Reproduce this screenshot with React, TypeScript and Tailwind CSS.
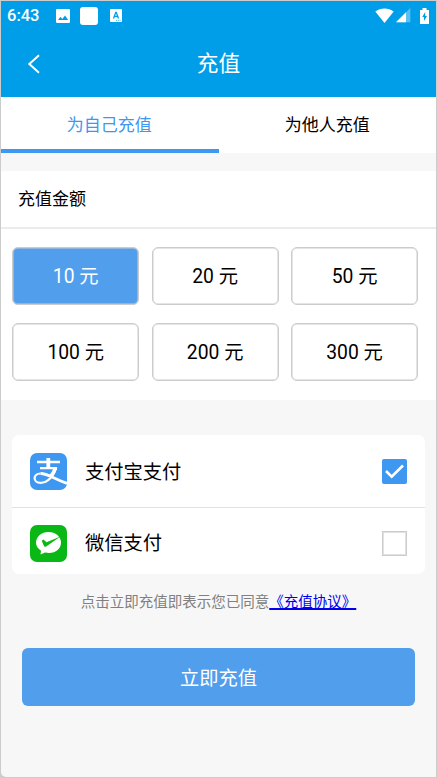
import clsx from 'clsx';

const amounts = [10, 20, 50, 100, 200, 300];

function StatusBar() {
  return (
    <div className="flex h-[29px] items-center pr-[7px] pl-[6px] text-white">
      <span className="w-[35px] pt-[2px] text-[16.5px] leading-none font-medium">6:43</span>
      <svg className="ml-[14px]" width="14" height="14" viewBox="0 0 14 14">
        <rect width="14" height="14" rx="1.3" fill="white" />
        <path d="M2 11 4.5 7.8 6.3 10 9 6.5 12.2 11Z" fill="#009ee8" />
      </svg>
      <div className="ml-[10px] h-[18px] w-[18px] rounded-[3px] bg-white" />
      <svg className="ml-[12px]" width="12" height="13" viewBox="0 0 12 13">
        <rect width="12" height="13" rx="1" fill="white" />
        <path d="M2.8 9.5 5.3 2.8H6.7L9.2 9.5H7.7L7.2 8H4.8L4.3 9.5ZM5.2 6.8H6.8L6 4.5Z" fill="#009ee8" fillRule="evenodd" />
        <path d="M6 11.3H11" stroke="#009ee8" strokeWidth="0.8" strokeDasharray="1 0.8" />
      </svg>
      <svg className="ml-auto" width="19" height="16" viewBox="0 0 19 16">
        <path d="M0.3 3.6C5.5-.6 13.5-.6 18.7 3.6L9.5 15Z" fill="white" />
      </svg>
      <svg className="ml-[2px]" width="15" height="15" viewBox="0 0 15 15">
        <path d="M14.3 0V14.3H0Z" fill="white" fillOpacity="0.35" />
        <path d="M10 4.3V14.3H0Z" fill="white" />
      </svg>
      <svg className="ml-[9px]" width="9" height="16" viewBox="0 0 9 16">
        <path d="M2.5 0h4v2H9v14H0V2h2.5Z" fill="white" />
        <path d="M5.2 4 2.2 9H4v4L7 8H5.2Z" fill="#009ee8" />
      </svg>
    </div>
  );
}

function AlipayIcon() {
  return (
    <svg width="37" height="37" viewBox="0 0 37 37">
      <rect width="37" height="37" rx="7" fill="#3e97f0" />
      <g fill="none" stroke="white">
        <path d="M7 9H30M10 15.2H27" strokeWidth="2.3" />
        <path d="M18.3 5V15.2" strokeWidth="3.8" />
        <path d="M26 15C24 22.5 18 29.8 10.5 29.8C2.8 29.8 2.5 20.5 10.5 20.5" strokeWidth="2.2" />
        <path d="M10.5 20.5C18 20.5 24 26 37 30.3" strokeWidth="2.8" />
        <path d="M25.5 15C24.3 18.5 22.8 21 20.5 23.8" strokeWidth="3.8" />
      </g>
    </svg>
  );
}

function WechatPayIcon() {
  return (
    <svg width="37" height="37" viewBox="0 0 37 37">
      <rect width="37" height="37" rx="7" fill="#09b814" />
      <path d="M18.5 7C11.5 7 6 11.7 6 17.5C6 21 8 23.8 11 25.7L10.5 29.5L15 27.5C24 29.6 31 24.5 31 17.5C31 11.7 25.5 7 18.5 7Z" fill="white" />
      <path d="M11.7 15.8 13.5 14.5 16.5 17.3 30.5 11.5 15.8 21.8 14.2 21.5Z" fill="#09b814" />
    </svg>
  );
}

function Checkbox({ checked }: { checked: boolean }) {
  if (!checked) return <span className="h-[25px] w-[25px] border border-[#ccc] bg-white shadow-[inset_0_0_0_1px_#e2e2e2]" />;
  return (
    <span className="h-[25px] w-[25px] rounded-[2px] bg-[#3e97f0]">
      <svg width="25" height="25" viewBox="0 0 25 25">
        <path d="M4 12 9.7 17.7 21 6.5" fill="none" stroke="white" strokeWidth="2.6" />
      </svg>
    </span>
  );
}

export default function App() {
  return (
    <div className="h-[778px] w-[437px] bg-[#ccc] p-px font-[Roboto,'Noto_Sans_CJK_SC',sans-serif] text-black">
      <div className="flex h-full flex-col overflow-hidden rounded-bl-[5px] bg-[#f7f7f7]">
        <header className="h-[96px] shrink-0 bg-[#009ee8] text-white">
          <StatusBar />
          <div className="grid h-[67px] grid-cols-[60px_1fr_60px] items-center">
            <svg className="ml-[26px]" width="14" height="20" viewBox="0 0 14 20">
              <path d="M12 1.3 2.3 10 12 18.7" fill="none" stroke="white" strokeWidth="2" />
            </svg>
            <h1 className="text-center text-[21.7px] leading-none">充值</h1>
          </div>
        </header>

        <nav className="grid h-[56px] shrink-0 grid-cols-2 bg-white text-[17px]">
          <button className="border-b-4 border-[#3e97f0] pt-[5px] pr-px text-[#3e97f0]">为自己充值</button>
          <button className="border-b-4 border-white pt-[5px]">为他人充值</button>
        </nav>

        <section className="mt-[18px] h-[229px] shrink-0 bg-white">
          <h2 className="flex h-[58px] items-center border-b-2 border-[#ebebeb] pt-[2px] pl-[17px] text-[17px]">充值金额</h2>
          <div className="grid grid-cols-3 gap-x-[12.5px] gap-y-[18px] pt-[18px] pr-[18px] pl-[11.3px]">
            {amounts.map((amount) => (
              <button
                key={amount}
                className={clsx(
                  'h-[58px] rounded-[6px] border border-[#ccc] pt-[2px] text-[19.3px] shadow-[inset_0_0_0_0.5px_#ccc]',
                  amount === 10 && 'bg-[#509eec] text-white',
                )}
              >
                {amount} 元
              </button>
            ))}
          </div>
        </section>

        <section className="mt-[35px] mr-[11px] ml-[11px] h-[139px] shrink-0 rounded-[7px] bg-white text-[19.3px]">
          <div className="flex h-[73px] items-center border-b border-[#e2e2e2] pr-[18px] pl-[18px]">
            <AlipayIcon />
            <span className="ml-[18px] flex-1 pt-[4px]">支付宝支付</span>
            <Checkbox checked />
          </div>
          <div className="flex h-[71px] items-center pr-[18px] pl-[18px]">
            <WechatPayIcon />
            <span className="ml-[18px] flex-1 pt-[2px]">微信支付</span>
            <Checkbox checked={false} />
          </div>
        </section>

        <p className="mt-[19px] text-center text-[14.5px] leading-[20px] text-[#808080]">
          点击立即充值即表示您已同意
          <a href="#" className="text-[#0000ee] underline decoration-[1.5px]">《充值协议》</a>
        </p>
        <button className="mt-[35px] mr-[21px] ml-[21px] h-[58px] shrink-0 rounded-[6px] bg-[#509eec] pt-[4px] text-[19.3px] text-white">
          立即充值
        </button>
      </div>
    </div>
  );
}
